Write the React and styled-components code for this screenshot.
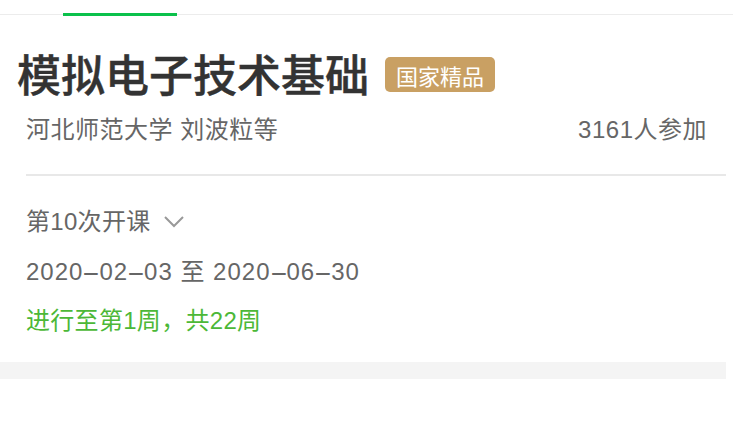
import React from 'react';
import styled, { createGlobalStyle } from 'styled-components';

const GlobalStyle = createGlobalStyle`
  html, body {
    margin: 0;
    padding: 0;
    background: #fff;
  }
  body {
    font-family: "Liberation Sans", "Noto Sans CJK SC", sans-serif;
  }
`;

const Page = styled.div`
  width: 733px;
  height: 434px;
  overflow: hidden;
  background: #fff;
`;

const Tabs = styled.div`
  height: 15px;
  border-bottom: 1.5px solid #ececec;
  box-sizing: border-box;
  display: flex;
  align-items: flex-end;
  padding-left: 63px;
`;

const TabIndicator = styled.div`
  width: 114px;
  height: 3px;
  margin-bottom: -1.5px;
  background: #0bc14b;
`;

const TitleRow = styled.div`
  display: flex;
  align-items: center;
  gap: 16px;
  margin: 36px 0 0 17px;
`;

const Title = styled.h1`
  margin: 0;
  font-size: 44px;
  line-height: 52px;
  font-weight: 500;
  color: #333;
  -webkit-text-stroke: 0.4px #333;
`;

const Badge = styled.span`
  display: inline-flex;
  align-items: center;
  height: 35px;
  padding: 0 11px;
  margin-top: -5px;
  border-radius: 5px;
  background: #c9a063;
  color: #fff;
  font-size: 22px;
`;

const Body = styled.div`
  padding: 0 7px 0 26px;
`;

const MetaRow = styled.div`
  display: flex;
  justify-content: space-between;
  margin-top: 12px;
  padding-right: 19px;
  font-size: 24px;
  line-height: 30px;
  color: #666;
  letter-spacing: 0.5px;
`;

const Divider = styled.hr`
  margin: 29px 0 0;
  border: none;
  border-top: 2px solid #e8e8e8;
`;

const Line = styled.div`
  display: flex;
  align-items: center;
  gap: 12px;
  margin-top: ${p => p.$gap}px;
  font-size: 24px;
  line-height: 30px;
  color: ${p => (p.$green ? '#4cb837' : '#666')};
  letter-spacing: ${p => (p.$wide ? 1 : 0.3)}px;
`;

const Dash = styled.span`
  display: inline-block;
  width: 16px;
  text-align: center;
  letter-spacing: 0;
  transform: scaleX(2.3);
`;

const Chevron = () => (
  <svg width="22" height="14" viewBox="0 0 22 14">
    <path d="M2 2 L11 11 L20 2" fill="none" stroke="#999" strokeWidth="2" />
  </svg>
);

const Band = styled.div`
  width: 726px;
  height: 17px;
  margin-top: 26px;
  background: #f4f4f4;
`;

const DateText = ({ text }) => (
  <span>
    {text.split('-').map((part, i) => (
      <React.Fragment key={i}>
        {i > 0 && <Dash>-</Dash>}
        {part}
      </React.Fragment>
    ))}
  </span>
);

export default function App() {
  return (
    <Page>
      <GlobalStyle />
      <Tabs>
        <TabIndicator />
      </Tabs>
      <TitleRow>
        <Title>模拟电子技术基础</Title>
        <Badge>国家精品</Badge>
      </TitleRow>
      <Body>
        <MetaRow>
          <span>河北师范大学 刘波粒等</span>
          <span>3161人参加</span>
        </MetaRow>
        <Divider />
        <Line $gap={31}>
          第10次开课 <Chevron />
        </Line>
        <Line $gap={20} $wide>
          <DateText text="2020-02-03 至 2020-06-30" />
        </Line>
        <Line $gap={19} $green>进行至第1周，共22周</Line>
      </Body>
      <Band />
    </Page>
  );
}
